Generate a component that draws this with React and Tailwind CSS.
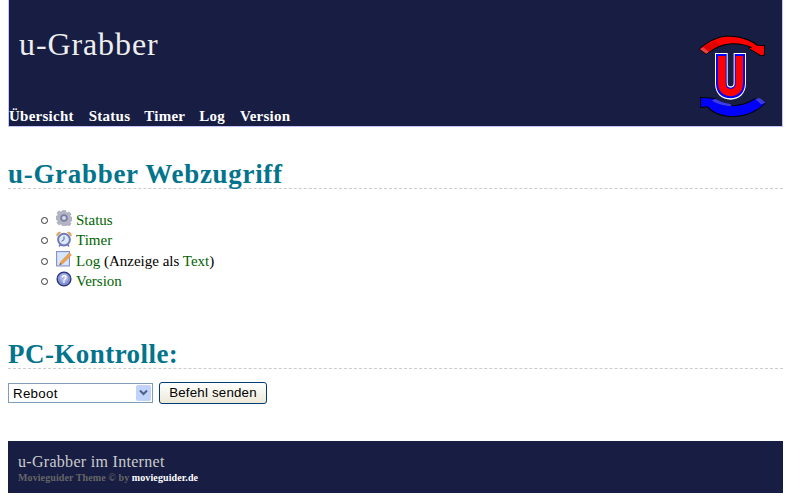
import { useState } from "react";

// drawn in 3x coordinates of the original logo
function Logo() {
  return (
    <svg width="68" height="82" viewBox="60 45 204 246" className="block">
      {/* top arrow */}
      <path d="M60 88 C80 68 105 54 130 49 C165 44 208 52 236 74 L258 76 L258 106 L245 109 L205 84 L214 81 C195 75 175 72 158 73 C130 75 108 85 82 104 Z" fill="#000" />
      <path d="M63 87 C84 68 108 56 132 51 C165 47 206 54 234 77 L255 78 L255 104 L246 106 L211 85 L220 82 C198 72 176 68 156 70 C128 72 106 82 82 101 Z" fill="#ff0000" />
      <path d="M63 88 L82 101 L90 95 L72 81 Z" fill="#e84040" />
      <path d="M72 81 L90 95 C102 86 112 80 124 76 L108 64 C94 68 82 74 72 81 Z" fill="#e00000" />
      {/* U */}
      <path d="M108 99 H146 V188 Q146 199 155 199 Q164 199 164 188 V99 H201 V190 C201 222 180 239 155 239 C128 239 108 222 108 190 Z" fill="#fff" />
      <path d="M111 102 H143 V190 Q143 203 155 203 Q167 203 167 190 V102 H198 V190 C198 220 178 235 155 235 C130 235 111 220 111 190 Z" fill="#0000ff" />
      <path d="M117 108 H140 V190 Q140 207 155 207 Q170 207 170 190 V108 H192 V190 C192 214 176 229 155 229 C134 229 117 214 117 190 Z" fill="#ff0000" />
      {/* bottom arrow */}
      <path d="M63 231 L112 234 L104 241 C120 250 140 256 160 256 C188 255 210 246 228 234 L261 248 C240 272 205 291 160 291 C125 291 100 280 84 262 L63 264 Z" fill="#000" />
      <path d="M66 234 L106 236 L98 242 C118 252 138 259 160 259 C188 258 212 249 229 237 L257 249 C236 270 203 288 160 288 C126 288 102 276 86 259 L66 261 Z" fill="#0000ff" />
      <path d="M98 242 L108 236 C122 244 138 250 154 252 L158 259 C136 258 116 252 98 242 Z" fill="#3c3cf0" />
      <path d="M229 237 L242 234 L260 248 L246 253 Z" fill="#3c3cdc" />
    </svg>
  );
}

function GearIcon() {
  return (
    <svg width="16" height="16" viewBox="0 0 16 16" className="mb-[4px] block">
      <path d="M6.4 .6h3.2l.4 1.9 1.3.5 1.6-1.1 2.2 2.2-1.1 1.6.5 1.3 1.9.4v3.2l-1.9.4-.5 1.3 1.1 1.6-2.2 2.2-1.6-1.1-1.3.5-.4 1.9H6.4L6 14.4l-1.3-.5-1.6 1.1L.9 12.8 2 11.2l-.5-1.3-1.9-.4V6.3l1.9-.4L2 4.6.9 3l2.2-2.2 1.6 1.1L6 1.4z" fill="#b4b5c4" stroke="#9294aa" strokeWidth="0.5" />
      <circle cx="8" cy="8" r="3.8" fill="#7c7fa0" />
      <circle cx="8" cy="8" r="2" fill="#d5d7ea" />
    </svg>
  );
}

function ClockIcon() {
  return (
    <svg width="16" height="16" viewBox="0 0 16 16" className="mb-[4px] block">
      <path d="M.8 5.2C.3 2.6 2 .6 4.6 1.2z" fill="#f2a84c" stroke="#c98a3c" strokeWidth="0.5" />
      <path d="M15.2 5.2C15.7 2.6 14 .6 11.4 1.2z" fill="#f2a84c" stroke="#c98a3c" strokeWidth="0.5" />
      <path d="M3 15.5l2-2.5M13 15.5L11 13" stroke="#7478ac" strokeWidth="1.4" />
      <circle cx="8" cy="8.6" r="5.9" fill="#dbe9fa" stroke="#7078bc" strokeWidth="2" />
      <path d="M8 5.5v3.2l-2.4 1.6" fill="none" stroke="#59608c" strokeWidth="1" />
    </svg>
  );
}

function LogIcon() {
  return (
    <svg width="16" height="16" viewBox="0 0 16 16" className="mb-[4px] block">
      <rect x="0.5" y="0.5" width="13" height="14.5" fill="#b9d4f4" stroke="#8c90d0" />
      <rect x="1.5" y="1.5" width="11" height="12.5" fill="#d7e6fa" />
      <path d="M5 10.5l-1.6 3.6 3.6-1.6 8.4-8.6-2-2z" fill="#f0a24a" stroke="#c9803a" strokeWidth="0.5" />
      <path d="M3.4 14.1l.9-2.2 1.3 1.3z" fill="#5a5a6a" />
    </svg>
  );
}

function HelpIcon() {
  return (
    <svg width="16" height="16" viewBox="0 0 16 16" className="mb-[4px] block">
      <circle cx="8" cy="8" r="6.9" fill="#8391d2" stroke="#28307a" strokeWidth="1.3" />
      <circle cx="8" cy="6.8" r="4.4" fill="#a8b2e4" />
      <text x="8" y="11.5" textAnchor="middle" fontSize="10" fontWeight="700" fontFamily="'Liberation Sans', sans-serif" fill="#fff">?</text>
    </svg>
  );
}

const navItems = [
  { label: "Übersicht", className: "mr-[15px]" },
  { label: "Status", className: "mr-[14px]" },
  { label: "Timer", className: "mr-[14px]" },
  { label: "Log", className: "mr-[15px]" },
  { label: "Version", className: "" },
];

export default function App() {
  const [command, setCommand] = useState("Reboot");

  return (
    <div className="min-h-[502px] bg-white px-2 font-['Liberation_Serif',serif] text-[14px] text-black">
      {/* HEADER */}
      <div className="flex h-[127px] justify-between border-x border-b border-[#c3c6ff] bg-[#171d43]">
        <div className="flex flex-col justify-between">
          <h1 className="ml-[10px] mt-[25px] text-[32px] leading-[38px] tracking-[0.9px] text-[#eeeeee]">u-Grabber</h1>
          <div className="mb-[1px] flex text-[15px] font-bold leading-[17px] tracking-[0.25px] text-white">
            {navItems.map((item) => (
              <a key={item.label} href="#" className={item.className}>
                {item.label}
              </a>
            ))}
          </div>
        </div>
        <div className="mr-[15px] mt-[35px]">
          <Logo />
        </div>
      </div>

      {/* WEBZUGRIFF */}
      <h2 className="mt-[33px] border-b border-dashed border-[#cccccc] text-[27px] font-bold leading-[28px] tracking-[0.7px] text-[#03748c]">
        u-Grabber Webzugriff
      </h2>
      <ul className="mt-[21px] pl-[33px] text-[15px] leading-[20.4px]">
        <li className="flex items-center gap-[8px]">
          <span className="h-[7px] w-[7px] rounded-full border border-[#333333]" />
          <span className="flex items-center gap-[4px]"><GearIcon /><a href="#" className="text-[#006400]">Status</a></span>
        </li>
        <li className="flex items-center gap-[8px]">
          <span className="h-[7px] w-[7px] rounded-full border border-[#333333]" />
          <span className="flex items-center gap-[4px]"><ClockIcon /><a href="#" className="text-[#006400]">Timer</a></span>
        </li>
        <li className="flex items-center gap-[8px]">
          <span className="h-[7px] w-[7px] rounded-full border border-[#333333]" />
          <span className="flex items-center gap-[4px]">
            <LogIcon />
            <span>
              <a href="#" className="text-[#006400]">Log</a> (Anzeige als <a href="#" className="text-[#006400]">Text</a>)
            </span>
          </span>
        </li>
        <li className="flex items-center gap-[8px]">
          <span className="h-[7px] w-[7px] rounded-full border border-[#333333]" />
          <span className="flex items-center gap-[4px]"><HelpIcon /><a href="#" className="text-[#006400]">Version</a></span>
        </li>
      </ul>

      {/* PC-KONTROLLE */}
      <h2 className="mt-[48px] border-b border-dashed border-[#cccccc] text-[27px] font-bold leading-[28px] tracking-[0.45px] text-[#03748c]">
        PC-Kontrolle:
      </h2>
      <div className="mt-[13px] flex items-center gap-[6px] font-['Liberation_Sans',sans-serif] text-[13.3px]">
        <div className="relative h-[20px] w-[145px] border border-[#7f9db9] bg-white">
          <select
            value={command}
            onChange={(e) => setCommand(e.target.value)}
            className="h-full w-full appearance-none bg-transparent pl-[4px] leading-[18px] tracking-[0.3px] outline-none"
          >
            <option>Reboot</option>
            <option>Shutdown</option>
          </select>
          <span className="pointer-events-none absolute right-[1px] top-[1px] flex h-[16px] w-[15px] items-center justify-center rounded-[2px] bg-[#c1d3fb]">
            <svg width="9" height="7" viewBox="0 0 9 7">
              <path d="M1 1.5l3.5 3.5L8 1.5" fill="none" stroke="#4d6185" strokeWidth="2" />
            </svg>
          </span>
        </div>
        <button className="h-[22px] w-[108px] rounded-[3px] border border-[#003c74] bg-gradient-to-b from-white to-[#ece9d8] leading-[20px] tracking-[0.2px] text-black">
          Befehl senden
        </button>
      </div>

      {/* FOOTER */}
      <div className="mt-[37px] h-[52px] bg-[#171d43] pl-[10px] pt-[12px]">
        <div className="text-[16px] font-medium leading-[17px] tracking-[0.3px] text-[#cccccc]">u-Grabber im Internet</div>
        <div className="mt-[2px] text-[10px] font-bold leading-[12px] tracking-[0.1px] text-[#666666]">
          Movieguider Theme © by <a href="#" className="text-white">movieguider.de</a>
        </div>
      </div>
    </div>
  );
}
